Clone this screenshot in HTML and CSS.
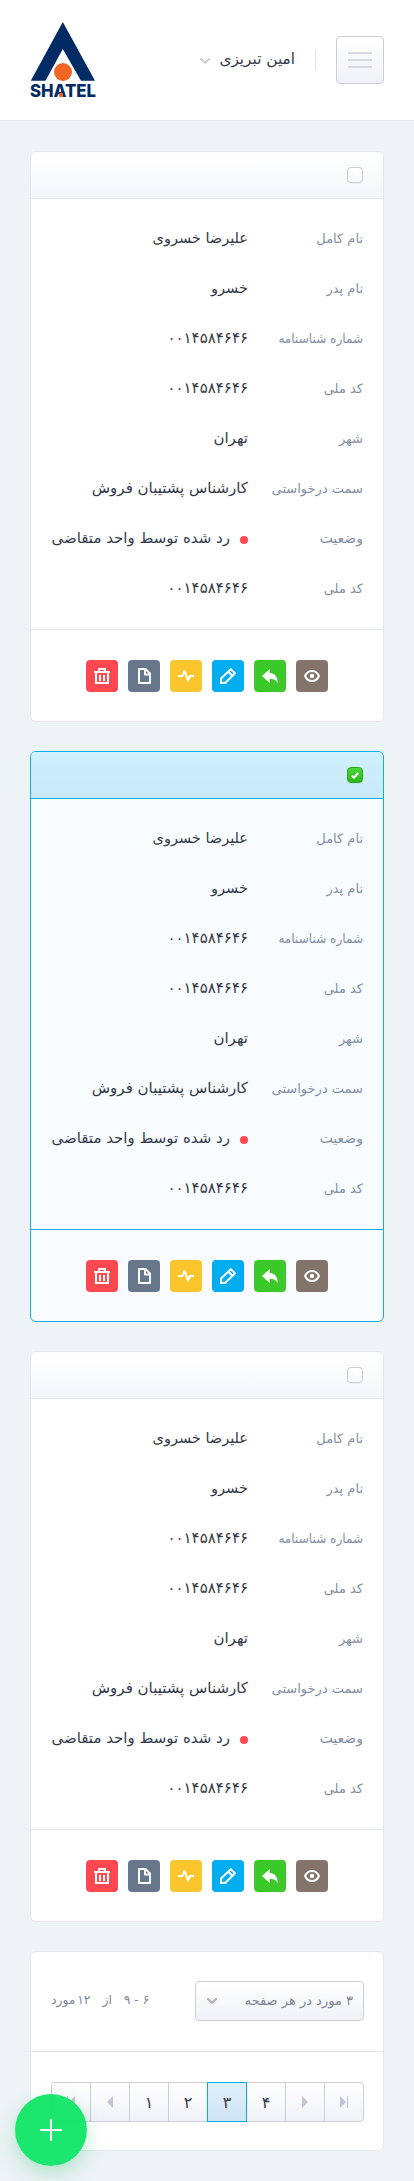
FILE: index.html
```html
<!DOCTYPE html>
<html lang="fa" dir="rtl">
<head>
<meta charset="utf-8">
<title>Shatel</title>
<link rel="stylesheet" href="styles.css">
</head>
<body>
<svg class="sprite" width="0" height="0" aria-hidden="true">
  <symbol id="i-eye" viewBox="0 0 16 16"><path d="M1 8C2.600 4.600 5 3 8 3s5.400 1.600 7 5c-1.600 3.400-4 5-7 5S2.600 11.400 1 8z" fill="none" stroke="#fff" stroke-width="2"/><circle cx="8" cy="8" r="2.200" fill="#fff"/></symbol>
  <symbol id="i-reply" viewBox="0 0 16 16"><path d="M7.700 1v4c5 .3 8 3.500 8 10-1.800-3-4.200-4.300-8-4.300v4.200L0 8z" fill="#fff"/></symbol>
  <symbol id="i-edit" viewBox="0 0 16 16"><path d="M1 15v-4.500L10.800 1.200 15 5.300 5.200 15zM8.300 3.800l4 4" fill="none" stroke="#fff" stroke-width="2"/></symbol>
  <symbol id="i-pulse" viewBox="0 0 16 16"><path d="M0 8h4.200L6.800 3.300 10 12.300 11.800 8H16" fill="none" stroke="#fff" stroke-width="2" stroke-linejoin="round"/></symbol>
  <symbol id="i-file" viewBox="0 0 16 16"><path d="M3 1h6.500L14 5.500V15H3zM9 1v5.500h5" fill="none" stroke="#fff" stroke-width="2" stroke-linejoin="round"/></symbol>
  <symbol id="i-trash" viewBox="0 0 16 16"><path d="M0 4h16M2 4v11h12V4M5 4V1h6v3M6 7v6M10 7v6" fill="none" stroke="#fff" stroke-width="2"/></symbol>
</svg>

<header class="topbar">
  <button class="menu-btn"><span></span><span></span><span></span></button>
  <span class="separator"></span>
  <span class="username">امین تبریزی</span>
  <svg class="chevron user-chevron" width="12" height="8" viewBox="0 0 12 8"><path d="M1.200 1.200 6 5.800l4.800-4.600"/></svg>
  <svg class="logo" width="66" height="76" viewBox="0 0 66 76">
    <path d="M32.800 0 65 58.700H51L32.800 27 15.500 58.700H.8z" fill="#002b64"/>
    <circle cx="33" cy="50" r="9" fill="#f26522"/>
    <text class="logo-text" x="0" y="75" textLength="66" lengthAdjust="spacingAndGlyphs">SHATEL</text>
    <circle cx="31" cy="73" r="2.200" fill="#f26522"/>
  </svg>
</header>

<main class="list">
  <article class="card">
    <div class="card-head"><span class="check"></span></div>
    <dl class="fields">
      <div class="row"><dt>نام کامل</dt><dd class="name">علیرضا خسروی</dd></div>
      <div class="row"><dt>نام پدر</dt><dd class="name">خسرو</dd></div>
      <div class="row"><dt><span class="tight">شماره شناسنامه</span></dt><dd>۰۰۱۴۵۸۴۶۴۶</dd></div>
      <div class="row"><dt>کد ملی</dt><dd>۰۰۱۴۵۸۴۶۴۶</dd></div>
      <div class="row"><dt>شهر</dt><dd>تهران</dd></div>
      <div class="row"><dt>سمت درخواستی</dt><dd>کارشناس پشتیبان فروش</dd></div>
      <div class="row"><dt class="wide">وضعیت</dt><dd class="status"><i class="dot"></i>رد شده توسط واحد متقاضی</dd></div>
      <div class="row"><dt>کد ملی</dt><dd>۰۰۱۴۵۸۴۶۴۶</dd></div>
    </dl>
    <div class="actions">
      <a class="act view"><svg><use href="#i-eye"/></svg></a>
      <a class="act reply"><svg><use href="#i-reply"/></svg></a>
      <a class="act edit"><svg><use href="#i-edit"/></svg></a>
      <a class="act pulse"><svg><use href="#i-pulse"/></svg></a>
      <a class="act file"><svg><use href="#i-file"/></svg></a>
      <a class="act trash"><svg><use href="#i-trash"/></svg></a>
    </div>
  </article>

  <article class="card selected">
    <div class="card-head"><span class="check"><svg width="8" height="7" viewBox="0 0 8 7"><path d="M.8 3.500 3 5.600 7.200 1" fill="none" stroke="#fff" stroke-width="2"/></svg></span></div>
    <dl class="fields">
      <div class="row"><dt>نام کامل</dt><dd class="name">علیرضا خسروی</dd></div>
      <div class="row"><dt>نام پدر</dt><dd class="name">خسرو</dd></div>
      <div class="row"><dt><span class="tight">شماره شناسنامه</span></dt><dd>۰۰۱۴۵۸۴۶۴۶</dd></div>
      <div class="row"><dt>کد ملی</dt><dd>۰۰۱۴۵۸۴۶۴۶</dd></div>
      <div class="row"><dt>شهر</dt><dd>تهران</dd></div>
      <div class="row"><dt>سمت درخواستی</dt><dd>کارشناس پشتیبان فروش</dd></div>
      <div class="row"><dt class="wide">وضعیت</dt><dd class="status"><i class="dot"></i>رد شده توسط واحد متقاضی</dd></div>
      <div class="row"><dt>کد ملی</dt><dd>۰۰۱۴۵۸۴۶۴۶</dd></div>
    </dl>
    <div class="actions">
      <a class="act view"><svg><use href="#i-eye"/></svg></a>
      <a class="act reply"><svg><use href="#i-reply"/></svg></a>
      <a class="act edit"><svg><use href="#i-edit"/></svg></a>
      <a class="act pulse"><svg><use href="#i-pulse"/></svg></a>
      <a class="act file"><svg><use href="#i-file"/></svg></a>
      <a class="act trash"><svg><use href="#i-trash"/></svg></a>
    </div>
  </article>

  <article class="card">
    <div class="card-head"><span class="check"></span></div>
    <dl class="fields">
      <div class="row"><dt>نام کامل</dt><dd class="name">علیرضا خسروی</dd></div>
      <div class="row"><dt>نام پدر</dt><dd class="name">خسرو</dd></div>
      <div class="row"><dt><span class="tight">شماره شناسنامه</span></dt><dd>۰۰۱۴۵۸۴۶۴۶</dd></div>
      <div class="row"><dt>کد ملی</dt><dd>۰۰۱۴۵۸۴۶۴۶</dd></div>
      <div class="row"><dt>شهر</dt><dd>تهران</dd></div>
      <div class="row"><dt>سمت درخواستی</dt><dd>کارشناس پشتیبان فروش</dd></div>
      <div class="row"><dt class="wide">وضعیت</dt><dd class="status"><i class="dot"></i>رد شده توسط واحد متقاضی</dd></div>
      <div class="row"><dt>کد ملی</dt><dd>۰۰۱۴۵۸۴۶۴۶</dd></div>
    </dl>
    <div class="actions">
      <a class="act view"><svg><use href="#i-eye"/></svg></a>
      <a class="act reply"><svg><use href="#i-reply"/></svg></a>
      <a class="act edit"><svg><use href="#i-edit"/></svg></a>
      <a class="act pulse"><svg><use href="#i-pulse"/></svg></a>
      <a class="act file"><svg><use href="#i-file"/></svg></a>
      <a class="act trash"><svg><use href="#i-trash"/></svg></a>
    </div>
  </article>

  <section class="card pager-card">
    <div class="pager-top">
      <div class="select"><span class="label">۳ مورد در هر صفحه</span><svg class="chevron" width="12" height="8" viewBox="0 0 12 8"><path d="M1.200 1.200 6 5.800l4.800-4.600"/></svg></div>
      <div class="range"><span class="span" dir="ltr">۹ - ۶</span><span>از</span><span>۱۲ مورد</span></div>
    </div>
    <nav class="pager">
      <a><svg width="8" height="12" viewBox="0 0 8 12"><path d="M0 0l6 6-6 6z"/><path d="M7 0h1v12H7z"/></svg></a>
      <a><svg width="6" height="12" viewBox="0 0 6 12"><path d="M0 0l6 6-6 6z"/></svg></a>
      <a>۴</a>
      <a class="current">۳</a>
      <a>۲</a>
      <a>۱</a>
      <a><svg width="6" height="12" viewBox="0 0 6 12"><path d="M6 0L0 6l6 6z"/></svg></a>
      <a><svg width="8" height="12" viewBox="0 0 8 12"><path d="M8 0L2 6l6 6z"/><path d="M0 0h1v12H0z"/></svg></a>
    </nav>
  </section>
</main>

<button class="fab"><svg width="22" height="22" viewBox="0 0 22 22"><path d="M11 0v22M0 11h22" stroke="#fff" stroke-width="2"/></svg></button>
</body>
</html>
```

FILE: styles.css
```css
* { box-sizing: border-box; }
body {
  position: relative;
  margin: 0;
  min-height: 2181px;
  background: #eef3f6;
  color: #333a4a;
  font-family: "DejaVu Sans", sans-serif;
  font-size: 14px;
}
.sprite { position: absolute; }
svg { display: block; }

.topbar {
  display: flex;
  align-items: center;
  height: 121px;
  padding: 0 30px;
  background: #fff;
  border-bottom: 1px solid #e3e7eb;
}
.menu-btn {
  display: flex;
  flex-direction: column;
  align-items: center;
  justify-content: center;
  gap: 5px;
  width: 48px;
  height: 48px;
  padding: 0;
  border: 1px solid #cdced9;
  border-radius: 4px;
  background: linear-gradient(#fff, #f1f2f7);
}
.menu-btn span { width: 24px; height: 2px; background: #d8d9e2; }
.separator { width: 1px; height: 20px; margin: 0 20px; background: #e1e4e8; }
.username { padding-bottom: 2px; font-size: 15.300px; line-height: 24px; white-space: nowrap; }
.chevron path { fill: none; stroke: #aeb0bd; stroke-width: 2; }
.user-chevron { margin-right: 8px; margin-top: 1px; }
.user-chevron path { stroke: #d0d1dd; }
.logo { margin-right: auto; overflow: visible; }
.logo-text {
  font: 800 17.800px Inter, "DejaVu Sans", sans-serif;
  direction: ltr;
  fill: #002b64;
}

.list {
  display: flex;
  flex-direction: column;
  gap: 29px;
  padding: 30px 30px 0;
}
.card {
  background: #fff;
  border: 1px solid #e4e8ec;
  border-radius: 6px;
  overflow: hidden;
}
.card-head {
  display: flex;
  align-items: center;
  height: 47px;
  padding: 0 20px;
  background: linear-gradient(#fff, #f5f6fa);
  border-bottom: 1px solid #e4e8ec;
}
.check {
  display: flex;
  align-items: center;
  justify-content: center;
  width: 16px;
  height: 16px;
  border: 1px solid #cdced9;
  border-radius: 4px;
  background: linear-gradient(#fff, #f8f8fb);
  box-shadow: 0 1px 1px rgba(0, 0, 0, .06);
}
.fields { margin: 0; padding: 15px 20px; }
.row { display: flex; align-items: center; height: 50px; padding-bottom: 2px; }
dt {
  width: 115px;
  color: #8390a5;
  font-size: 13px;
  white-space: nowrap;
}
.tight { display: inline-block; transform: scaleX(.93); transform-origin: right; }
.wide { font-size: 14px; }
dd { margin: 0; font-size: 15px; white-space: nowrap; }
.name { font-size: 14.500px; }
.status { display: flex; align-items: center; }
.dot {
  width: 8px;
  height: 8px;
  margin: 4px 0 0 10px;
  border-radius: 50%;
  background: #ff4850;
}
.actions {
  display: flex;
  justify-content: center;
  gap: 10px;
  padding: 30px 0 29px;
  border-top: 1px solid #e4e8ec;
}
.act {
  display: flex;
  align-items: center;
  justify-content: center;
  width: 32px;
  height: 32px;
  border-radius: 4px;
}
.act svg { width: 16px; height: 16px; }
.view { background: #82746a; }
.reply { background: #3cc72a; }
.edit { background: #00aeef; }
.pulse { background: #fbc52d; }
.file { background: #68768c; }
.trash { background: #ff4850; }

.selected { background: #f8fcff; border-color: #0cb0e9; }
.selected .card-head {
  background: linear-gradient(#cff0fc, #c9e9f8);
  border-color: #0cb0e9;
}
.selected .actions { border-color: #0cb0e9; }
.selected .check {
  border-color: #2aa817;
  background: linear-gradient(#4bd53a, #2cb61a);
}

.pager-card { height: 200px; }
.pager-top {
  display: flex;
  align-items: center;
  justify-content: space-between;
  height: 100px;
  padding: 0 19px 1px 20px;
  border-bottom: 1px solid #e4e8ec;
}
.select {
  display: flex;
  align-items: center;
  justify-content: space-between;
  width: 169px;
  height: 40px;
  padding: 0 10px;
  border: 1px solid #cdced9;
  border-radius: 4px;
  background: linear-gradient(#fff, #f1f2f7);
}
.select, .range { color: #7d8799; font-size: 13px; white-space: nowrap; }
.select .label { padding-bottom: 2px; }
.range { display: flex; align-items: center; gap: 12px; padding-bottom: 2px; font-size: 12.300px; word-spacing: -2px; }
.range .span { word-spacing: 0; }
.pager { display: flex; padding: 30px 19px 0 20px; }
.pager a {
  display: flex;
  flex: none;
  align-items: center;
  justify-content: center;
  width: 40px;
  height: 40px;
  margin-left: -1px;
  border: 1px solid #cdced9;
  background: linear-gradient(#fff, #f1f2f7);
  color: #333a4a;
  font-size: 16px;
}
.pager a:first-child { border-radius: 0 4px 4px 0; }
.pager a:last-child { margin-left: 0; border-radius: 4px 0 0 4px; }
.pager path { fill: #bec6d8; }
.pager .current {
  z-index: 1;
  border-color: #00aeef;
  background: linear-gradient(#e0f1fd, #cfe4f4);
}

.fab {
  position: absolute;
  left: 15px;
  top: 2094px;
  display: flex;
  align-items: center;
  justify-content: center;
  width: 72px;
  height: 72px;
  padding: 0;
  border: 0;
  border-radius: 50%;
  background: rgba(18, 230, 105, .96);
  box-shadow: 0 8px 20px rgba(40, 190, 110, .3);
}
```
